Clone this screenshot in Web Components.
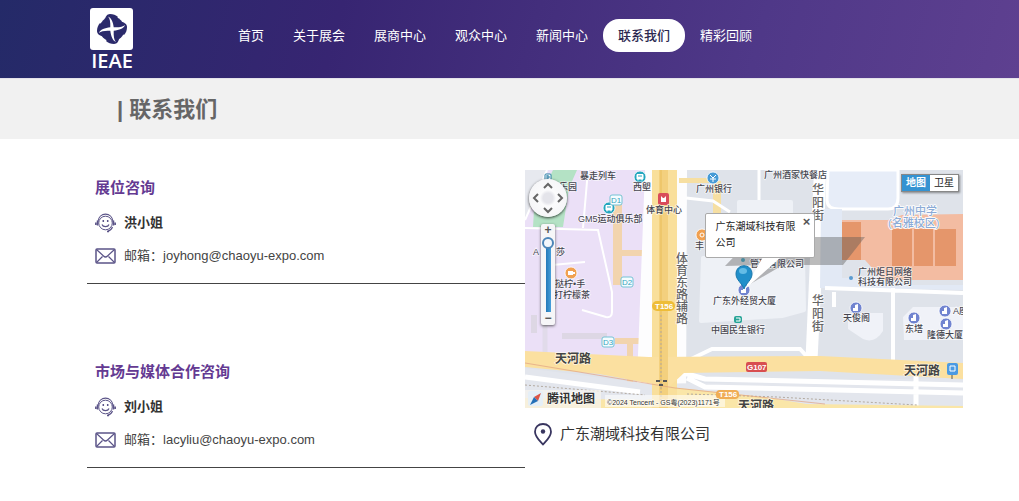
<!DOCTYPE html>
<html lang="zh-CN">
<head>
<meta charset="utf-8">
<meta name="viewport" content="width=device-width, initial-scale=1">
<title>联系我们 - IEAE</title>
<style>
  body { margin: 0; background: #fff; color: #333; font: 13px/20px "Liberation Sans", "Noto Sans CJK SC", sans-serif; }
</style>
</head>
<body>
<site-header></site-header>
<page-banner>联系我们</page-banner>
<contact-page>
  <contact-card slot="contacts" name="洪小姐" email="joyhong@chaoyu-expo.com">展位咨询</contact-card>
  <contact-card slot="contacts" name="刘小姐" email="lacyliu@chaoyu-expo.com">市场与媒体合作咨询</contact-card>
  <location-map slot="place"></location-map>
  <place-line slot="place">广东潮域科技有限公司</place-line>
</contact-page>

<script>
const define = (name, html, fill) => customElements.define(name, class extends HTMLElement {
  constructor() {
    super();
    this.attachShadow({ mode: "open" }).innerHTML = html;
  }
  connectedCallback() { if (fill) fill(this, this.shadowRoot); }
});

define("ieae-logo", `
<style>
  :host { display: block; width: 44px; }
  a { display: block; color: #fff; text-decoration: none; }
  svg { display: block; width: 100%; height: auto; }
</style>
<a href="#" aria-label="IEAE">
  <svg viewBox="0 0 44 68">
    <rect x="0" y="0" width="43" height="42" rx="3" fill="#fff"/>
    <g fill="#2b2a6b">
      <circle cx="22" cy="21" r="12.500"/>
      <path d="M15 12c0-3 2-6 5-6 3 0 6 1 8 3l-6 8z"/>
      <path d="M15 12c0-3 2-6 5-6 3 0 6 1 8 3l-6 8z" transform="rotate(90 22 21)"/>
      <path d="M15 12c0-3 2-6 5-6 3 0 6 1 8 3l-6 8z" transform="rotate(180 22 21)"/>
      <path d="M15 12c0-3 2-6 5-6 3 0 6 1 8 3l-6 8z" transform="rotate(270 22 21)"/>
    </g>
    <path d="M18 8.500C21.500 10 23 14 23.700 19.300 29 19.600 33 19 35 17 34 20.500 29 22 23.700 22.700 23.500 28 24 32 26 34 22.500 32.500 21 28 20.300 22.700 15 22.400 11 23 9 25 10 21.500 15 20 20.300 19.300 20.500 14 20 10.500 18 8.500z" fill="#fff"/>
    <text x="22" y="60" text-anchor="middle" font-family="Open Sans, sans-serif" font-size="20" font-weight="600" fill="#fff">IEAE</text>
  </svg>
</a>`);

define("site-header", `
<style>
  :host { display: block; background: linear-gradient(105deg, #242a68 0%, #372572 33%, #432e7c 52%, #4f3888 74%, #5e4090 100%); }
  header { display: flex; align-items: flex-start; min-height: 78px; padding: 0 56px 0 90px; box-sizing: border-box; gap: 90px; }
  ieae-logo { margin-top: 8px; flex: none; }
  nav { margin-top: 19px; }
  ul { display: flex; gap: 1px; margin: 0; padding: 0; list-style: none; }
  a { display: block; padding: 0 14px; line-height: 33px; border-radius: 16px; color: #fff; text-decoration: none; white-space: nowrap; }
  a[aria-current] { padding: 0 15px; background: #fff; color: #2b2850; font-weight: 500; }
</style>
<header>
  <ieae-logo></ieae-logo>
  <nav aria-label="主导航"><ul>
    <li><a href="#">首页</a></li>
    <li><a href="#">关于展会</a></li>
    <li><a href="#">展商中心</a></li>
    <li><a href="#">观众中心</a></li>
    <li><a href="#">新闻中心</a></li>
    <li><a href="#" aria-current="page">联系我们</a></li>
    <li><a href="#">精彩回顾</a></li>
  </ul></nav>
</header>`);

define("page-banner", `
<style>
  :host { display: block; background: #f1f1f1; padding: 16px 56px 14px 117px; border-top: 1px solid #e4e2ea; }
  h1 { margin: 0; font-size: 22px; line-height: 30px; font-weight: 700; color: #666; }
</style>
<h1>| <slot></slot></h1>`);

define("contact-page", `
<style>
  :host { display: block; }
  main { display: grid; grid-template-columns: 1fr 1fr; padding: 31px 56px 33px 87px; }
  .contacts { display: grid; gap: 70px; align-content: start; }
</style>
<main>
  <div class="contacts"><slot name="contacts"></slot></div>
  <div><slot name="place"></slot></div>
</main>`);

define("contact-card", `
<style>
  :host { display: block; border-bottom: 1px solid #444; padding: 8px 8px 17px; }
  h2 { margin: 0 0 15px; font-size: 15px; line-height: 20px; color: #643a92; }
  p { display: flex; align-items: center; gap: 8px; margin: 0; line-height: 20px; }
  p + p { margin-top: 13px; }
  svg { width: 21px; height: 20px; flex: none; fill: none; stroke: #5b5488; }
  a { color: inherit; text-decoration: none; }
  span { color: #444; }
</style>
<h2><slot></slot></h2>
<p>
  <svg viewBox="0 0 21 20" aria-hidden="true">
    <circle cx="10.500" cy="10" r="6.800" stroke-width="1"/>
    <path d="M2.800 9C4-1.500 17-1.500 18.200 9M17.500 14c-1 2.500-2.500 3.800-4.800 4.300" stroke-width="1.200"/>
    <path d="M2.500 7.500v5M.8 9.500v2.500M18.500 7.500v5M20.200 9.500v2.500" stroke-width="1.500"/>
    <path d="M7 11.500c1 2.800 6 2.800 7 0" stroke-width="1.200"/>
    <path d="M8.300 7v2M12.700 7v2M12 18.500h2" stroke-width="1.500"/>
  </svg>
  <strong></strong>
</p>
<p>
  <svg viewBox="0 0 21 20" aria-hidden="true">
    <rect x="1" y="3" width="19" height="14" rx="1" stroke-width="1.500"/>
    <path d="M1.500 3.500l7 6.500c1.500 1.500 2.500 1.500 4 0l7-6.500M1.500 16.500l6-6M19.500 16.500l-6-6" stroke-width="1.200"/>
  </svg>
  <span>邮箱：<a></a></span>
</p>`, (host, root) => {
  root.querySelector("strong").textContent = host.getAttribute("name");
  const link = root.querySelector("a");
  link.textContent = host.getAttribute("email");
  link.href = "mailto:" + host.getAttribute("email");
});

define("place-line", `
<style>
  :host { display: flex; align-items: center; gap: 7px; padding: 14px 8px 0; font-size: 15px; line-height: 24px; }
  svg { width: 20px; height: 24px; flex: none; }
</style>
<svg viewBox="0 0 20 24" aria-hidden="true">
  <path d="M10 2C5.300 2 2 5.300 2 9.700c0 5 4.500 8.800 8 12.800 3.500-4 8-7.800 8-12.800C18 5.300 14.700 2 10 2z" fill="none" stroke="#38355f" stroke-width="1.800"/>
  <circle cx="10" cy="9.500" r="2.200" fill="#38355f"/>
</svg>
<span><slot></slot></span>`);

define("map-pan", `
<style>
  :host { display: block; position: relative; width: 38px; height: 38px; border-radius: 50%; background: radial-gradient(#e4e4ea 0 18%, #fbfbfc 30%, #f2f2f5); box-shadow: 0 1px 3px #000b; }
  button { position: absolute; inset: 0; margin: auto; width: 12px; height: 12px; padding: 0; border: 0; background: none; display: grid; }
  svg { width: 12px; height: 12px; fill: none; stroke: #666; stroke-width: 2; }
  .n { bottom: 24px; } .s { top: 24px; } .w { right: 24px; } .e { left: 24px; }
  .s svg { rotate: 180deg; } .w svg { rotate: -90deg; } .e svg { rotate: 90deg; }
</style>
${[["n", "向上平移"], ["s", "向下平移"], ["w", "向左平移"], ["e", "向右平移"]].map(([c, t]) =>
  `<button class="${c}" type="button" aria-label="${t}"><svg viewBox="0 0 12 12"><path d="M2 8l4-4 4 4"/></svg></button>`).join("")}`);

define("map-zoom", `
<style>
  :host { display: flex; flex-direction: column; align-items: center; width: 14px; background: #f6f6f8; border-radius: 2px; box-shadow: 0 1px 3px #0009; }
  button { width: 14px; height: 13px; padding: 0; border: 0; background: none; font: bold 12px/13px "Liberation Sans", sans-serif; color: #555; }
  input { appearance: none; writing-mode: vertical-lr; direction: ltr; width: 12px; height: 75px; margin: 0; background: linear-gradient(90deg, #2679b8, #469fdb) center bottom / 5px 70px no-repeat; }
  input::-webkit-slider-thumb { appearance: none; box-sizing: border-box; width: 12px; height: 12px; border: 2px solid #4d86b8; border-radius: 50%; background: #f4f7fb; }
</style>
<button type="button" aria-label="放大">+</button>
<input type="range" min="0" max="18" value="0" aria-label="缩放级别">
<button type="button" aria-label="缩小">−</button>`);

define("map-type", `
<style>
  :host { display: flex; border: 1px solid #888; box-shadow: 1px 1px 2px #0006; }
  button { width: 28px; height: 16px; padding: 0; border: 0; background: #fff; color: #222; font: 10px/16px "Liberation Sans", "Noto Sans CJK SC", sans-serif; }
  button[aria-pressed=true] { background: #3593d2; color: #fff; font-weight: 700; }
</style>
<button type="button" aria-pressed="true">地图</button><button type="button" aria-pressed="false">卫星</button>`);

define("map-info", `
<style>
  :host { display: block; box-sizing: border-box; width: 110px; background: #fff; border: 1px solid #aaa; border-radius: 2px; padding: 5px 16px 6px 10px; font-size: 10px; line-height: 16px; color: #222; }
  button { position: absolute; top: 1px; right: 1px; width: 12px; height: 14px; padding: 0; border: 0; background: none; font: bold 13px/14px "Liberation Sans", sans-serif; color: #555; }
</style>
<div><slot></slot></div><button type="button" aria-label="关闭">×</button>`);

const label = (x, y, text, cls = "") => `<text x="${x}" y="${y}" class="${cls}">${text}</text>`;
const column = (x, y, step, text) => [...text].map((c, i) => label(x, y + i * step, c, "street")).join("");
const poi = (x, y, color, shape) => `<g transform="translate(${x} ${y})"><circle r="6" fill="${color}" stroke="#fff" stroke-width=".8"/>${shape}</g>`;
const tower = '<path d="M-3 3V0h2v-3l3-1v7z" fill="#fff"/>';
const bus = '<path d="M-3-2.500h6V2h-6zM-2 2v1.500M2 2v1.500" fill="#fff" stroke="#fff"/><path d="M-2-1h4" stroke="#24a6bf"/>';
const gate = (x, y, text) => `<rect x="${x - 6}" y="${y - 5}" width="12" height="10" rx="2" fill="#f5fcff" stroke="#74c3d5"/>` + label(x - 5, y + 3, text, "gate");

define("location-map", `
<style>
  :host { display: block; position: relative; overflow: hidden; }
  .canvas { display: block; width: 100%; height: auto; }
  text { font: 500 9px "Liberation Sans", "Noto Sans CJK SC", sans-serif; fill: #45454f; paint-order: stroke; stroke: #fffa; stroke-width: 1.500px; }
  .street { font-size: 12px; fill: #666; }
  .road { font-size: 12px; font-weight: 700; fill: #444; }
  .school { font-size: 11px; fill: #8cabd6; stroke: #fff; }
  .gate { font-size: 8px; fill: #38a4bd; stroke: none; }
  .badge { font-size: 8px; font-weight: 700; fill: #fff; stroke: none; }
  .brand { font-size: 12px; font-weight: 700; fill: #333; }
  .legal { font-size: 7px; font-weight: 400; fill: #333; }
  map-pan, map-zoom, map-type, map-info { position: absolute; }
  map-pan { left: 4px; top: 9px; }
  map-zoom { left: 16px; top: 54px; }
  map-type { right: 4px; top: 4px; }
  map-info { left: 41%; top: 43px; }
</style>
<svg class="canvas" viewBox="0 0 438 238" aria-label="地图">
  <rect width="438" height="238" fill="#dfe3ea"/>
  <path d="M0 0h124l-2 190L0 184z" fill="#ebe0f7"/>
  <path d="M0 0h21L0 48z" fill="#e7e9ef"/>
  <path d="M28 0h24l-8 18-6 39H8l1-17z" fill="#b4e2c5"/>
  <path d="M22 0L0 50M0 58l73 2 14 62v20q0 6-6 5l-24-7M63 0l-5 58M16 96l44-4" fill="none" stroke="#fff" stroke-width="2"/>
  <path d="M37 163h45v6H37zM6 145h6v18H6z" fill="#ddd7e4"/>
  <path d="M20 155v29" stroke="#e1dbea" stroke-width="5"/>
  <path d="M88 25h9v55h30v6H97v29h-9zM90 168h37v6h-19v54h-6v-54H90z" fill="#f2d4ae"/>
  <path d="M120 0h42l-1 238h-50z" fill="#fdfdfe"/>
  <path d="M185 12h-30v-3h28zM189 12h6v36h-6z" fill="#f6dfa2" stroke="#f6dfa2" stroke-width="2"/>
  <path d="M161 28l27 3 17 11M234 0v30" fill="none" stroke="#fff" stroke-width="3"/>
  <path d="M214 32h52v12h-52zM178 88h100l1 52-22 6-81 5z" fill="#eef1f6" stroke="#eef1f6" stroke-width="4" stroke-linejoin="round"/>
  <path d="M289 0h12l-1 40-8 160h-12z" fill="#fff"/>
  <path d="M303 0l-1 30q0 9 12 9h49q10 0 10-11V0z" fill="#e7edf8" stroke="#fff" stroke-width="3"/>
  <path d="M296 39h21v69h35l12 7h74v5l-143-2z" fill="#e2e9f5"/>
  <path d="M317 50h46l14-5 61-1v66h-80l-18-20h-23z" fill="#f3bca2"/>
  <path d="M317 52h19v38h-19zM367 59h20v37h-20zM389 59h19v37h-19zM410 59h21v37h-21z" fill="#e5966b"/>
  <path d="M300 118l138 5M368 118v80M309 122v15" fill="none" stroke="#fff" stroke-width="4"/>
  <path d="M323 143h35v18q-8 13-20 8l-15-10zM378 147l10-10h50v33h-59z" fill="#f0f2f8"/>
  <path d="M0 198l125 16 300-6 13 2v28H0z" fill="#e3e6ed"/>
  <path d="M0 207l115 15M162 208l18 9 258 6M155 202l25 7 258 6M391 200v38" fill="none" stroke="#fff" stroke-width="5"/>
  <path d="M162 191l25-12h88l11 12" fill="none" stroke="#fff" stroke-width="4"/>
  <path d="M0 228l120 2 60-6 100 10 158 2v2H0z" fill="#fae6a8"/>
  <path d="M145 217l95 10 65 11H145z" fill="#fae6a8"/>
  <path d="M127 0h25v238h-25z" fill="#f9df9b"/>
  <path d="M0 181l124 6 171-1 143 7v16l-143-8-136 2-15 14-70-13L0 197z" fill="#fbe0a0"/>
  <path d="M134 0h9v238h-9z" fill="#f3d07e"/>
  <path d="M136 0v220" stroke="#e9bd58"/>
  <path d="M136 145v85M0 215l120 10M162 224l90 3 140 8" fill="none" stroke="#b3aaa0" stroke-dasharray="2 2"/>
  <path d="M0 193l150 25 150 16" fill="none" stroke="#e0a183" stroke-width=".7"/>
  <path d="M131 211h4m3 0h4M134 215h4" stroke="#555" stroke-width="2"/>
  <path d="M200 96l28-29h112l-22 28h-60l-38 22 20-22z" fill="#5556"/>

  ${poi(115, 7, "#24a6bf", bus)}${poi(84, 38, "#24a6bf", bus)}
  ${poi(188, 8, "#479bd6", '<path d="M-3-3l3 3 3-3M0 0v4M-3 1h6" stroke="#fff" fill="none"/>')}
  ${poi(46, 103, "#f0a050", '<path d="M-3-2h5v4h-5zM2-1h2v2H2" fill="#fff"/>')}
  ${poi(177, 65, "#f0a050", '<circle r="2" fill="none" stroke="#fff"/>')}
  ${poi(219, 120, "#7184d0", tower)}${poi(331, 138, "#7184d0", tower)}${poi(389, 148, "#7184d0", tower)}${poi(420, 141, "#7184d0", tower)}${poi(421, 154, "#7184d0", tower)}
  <rect x="133" y="23" width="11" height="12" rx="2" fill="#d94c5a"/><path d="M136 26l2 2h1l2-2v6h-5z" fill="#fff"/>
  <rect x="209" y="146" width="8" height="7" rx="2" fill="#28a497"/><path d="M211 148h4v3h-4" fill="none" stroke="#fff"/>
  <circle cx="326" cy="108" r="2" fill="#5a9bd0"/><circle cx="218" cy="90" r="2" fill="#4a8a9d"/>
  <rect x="20" y="4" width="6" height="7" rx="1" fill="#fff" stroke="#297fa6"/><path d="M22 5v5m0-4h2v2h-2" stroke="#297fa6" fill="none"/>
  <rect x="422" y="193" width="11" height="12" rx="2" fill="#4b9ae3"/><path d="M425 196h5v5h-5z" fill="none" stroke="#fff"/><path d="M427 205v4" stroke="#555"/>
  ${gate(91, 30, "D1")}${gate(102, 112, "D2")}${gate(83, 172, "D3")}
  <rect x="127" y="131" width="23" height="10" rx="5" fill="#eebd38"/>${label(130, 139, "T156", "badge")}
  <rect x="221" y="192" width="21" height="10" rx="2" fill="#d84e50"/>${label(222, 200, "G107", "badge")}

  ${label(55, 9, "暴走列车")}${label(108, 20, "西塱")}${label(34, 20, "乐园")}
  ${label(53, 52, "GM5运动俱乐部")}${label(121, 43, "体育中心")}
  ${label(8, 85, "A")}${label(31, 85, "莎")}
  ${label(30, 117, "挞柠•手")}${label(29, 128, "打柠檬茶")}
  ${label(171, 22, "广州银行")}${label(239, 8, "广州酒家快餐店")}
  ${label(170, 79, "丰")}${label(225, 97, "管理有限公司")}
  ${label(368, 45, "广州中学", "school")}${label(363, 57, "(名雅校区)", "school")}
  ${label(333, 105, "广州炬日网络")}${label(333, 115, "科技有限公司")}
  ${label(188, 134, "广东外经贸大厦")}${label(186, 163, "中国民生银行")}
  ${label(318, 151, "天俊阁")}${label(380, 162, "东塔")}${label(402, 168, "隆德大厦")}${label(428, 144, "A座")}
  ${column(287, 24, 13, "华阳街")}${column(287, 135, 13, "华阳街")}${column(151, 93, 12, "体育东路辅路")}
  ${label(30, 193, "天河路", "road")}${label(379, 205, "天河路", "road")}${label(213, 240, "天河路", "road")}

  <path d="M221 84h35v3l-37 33 19-33h-17z" fill="#fff"/>
  <path d="M219 119c-2-6-8-9-8-15 0-11 16-11 16 0 0 6-6 9-8 15z" fill="#218fca" stroke="#1878ad"/>
  <ellipse cx="218" cy="101" rx="4" ry="3" fill="#64bce6"/>
  <rect x="0" y="220" width="76" height="18" fill="#f6f3ed" opacity=".75"/><rect x="80" y="225" width="120" height="12" fill="#fff" opacity=".55"/>
  <rect x="191" y="220" width="23" height="9" rx="4" fill="#f0ad55"/>${label(194, 227, "T156", "badge")}
  <rect x="3" y="221" width="15" height="15" rx="2" fill="#e5eff7"/>
  <path d="M16 223l-3 8-4-4z" fill="#dc5546"/><path d="M5 235l4-8 4 4z" fill="#2470b7"/>
  ${label(22, 233, "腾讯地图", "brand")}${label(82, 235, "©2024 Tencent - GS粤(2023)1171号", "legal")}
</svg>
<map-pan></map-pan>
<map-zoom></map-zoom>
<map-type></map-type>
<map-info>广东潮域科技有限公司</map-info>`);
</script>
</body>
</html>
